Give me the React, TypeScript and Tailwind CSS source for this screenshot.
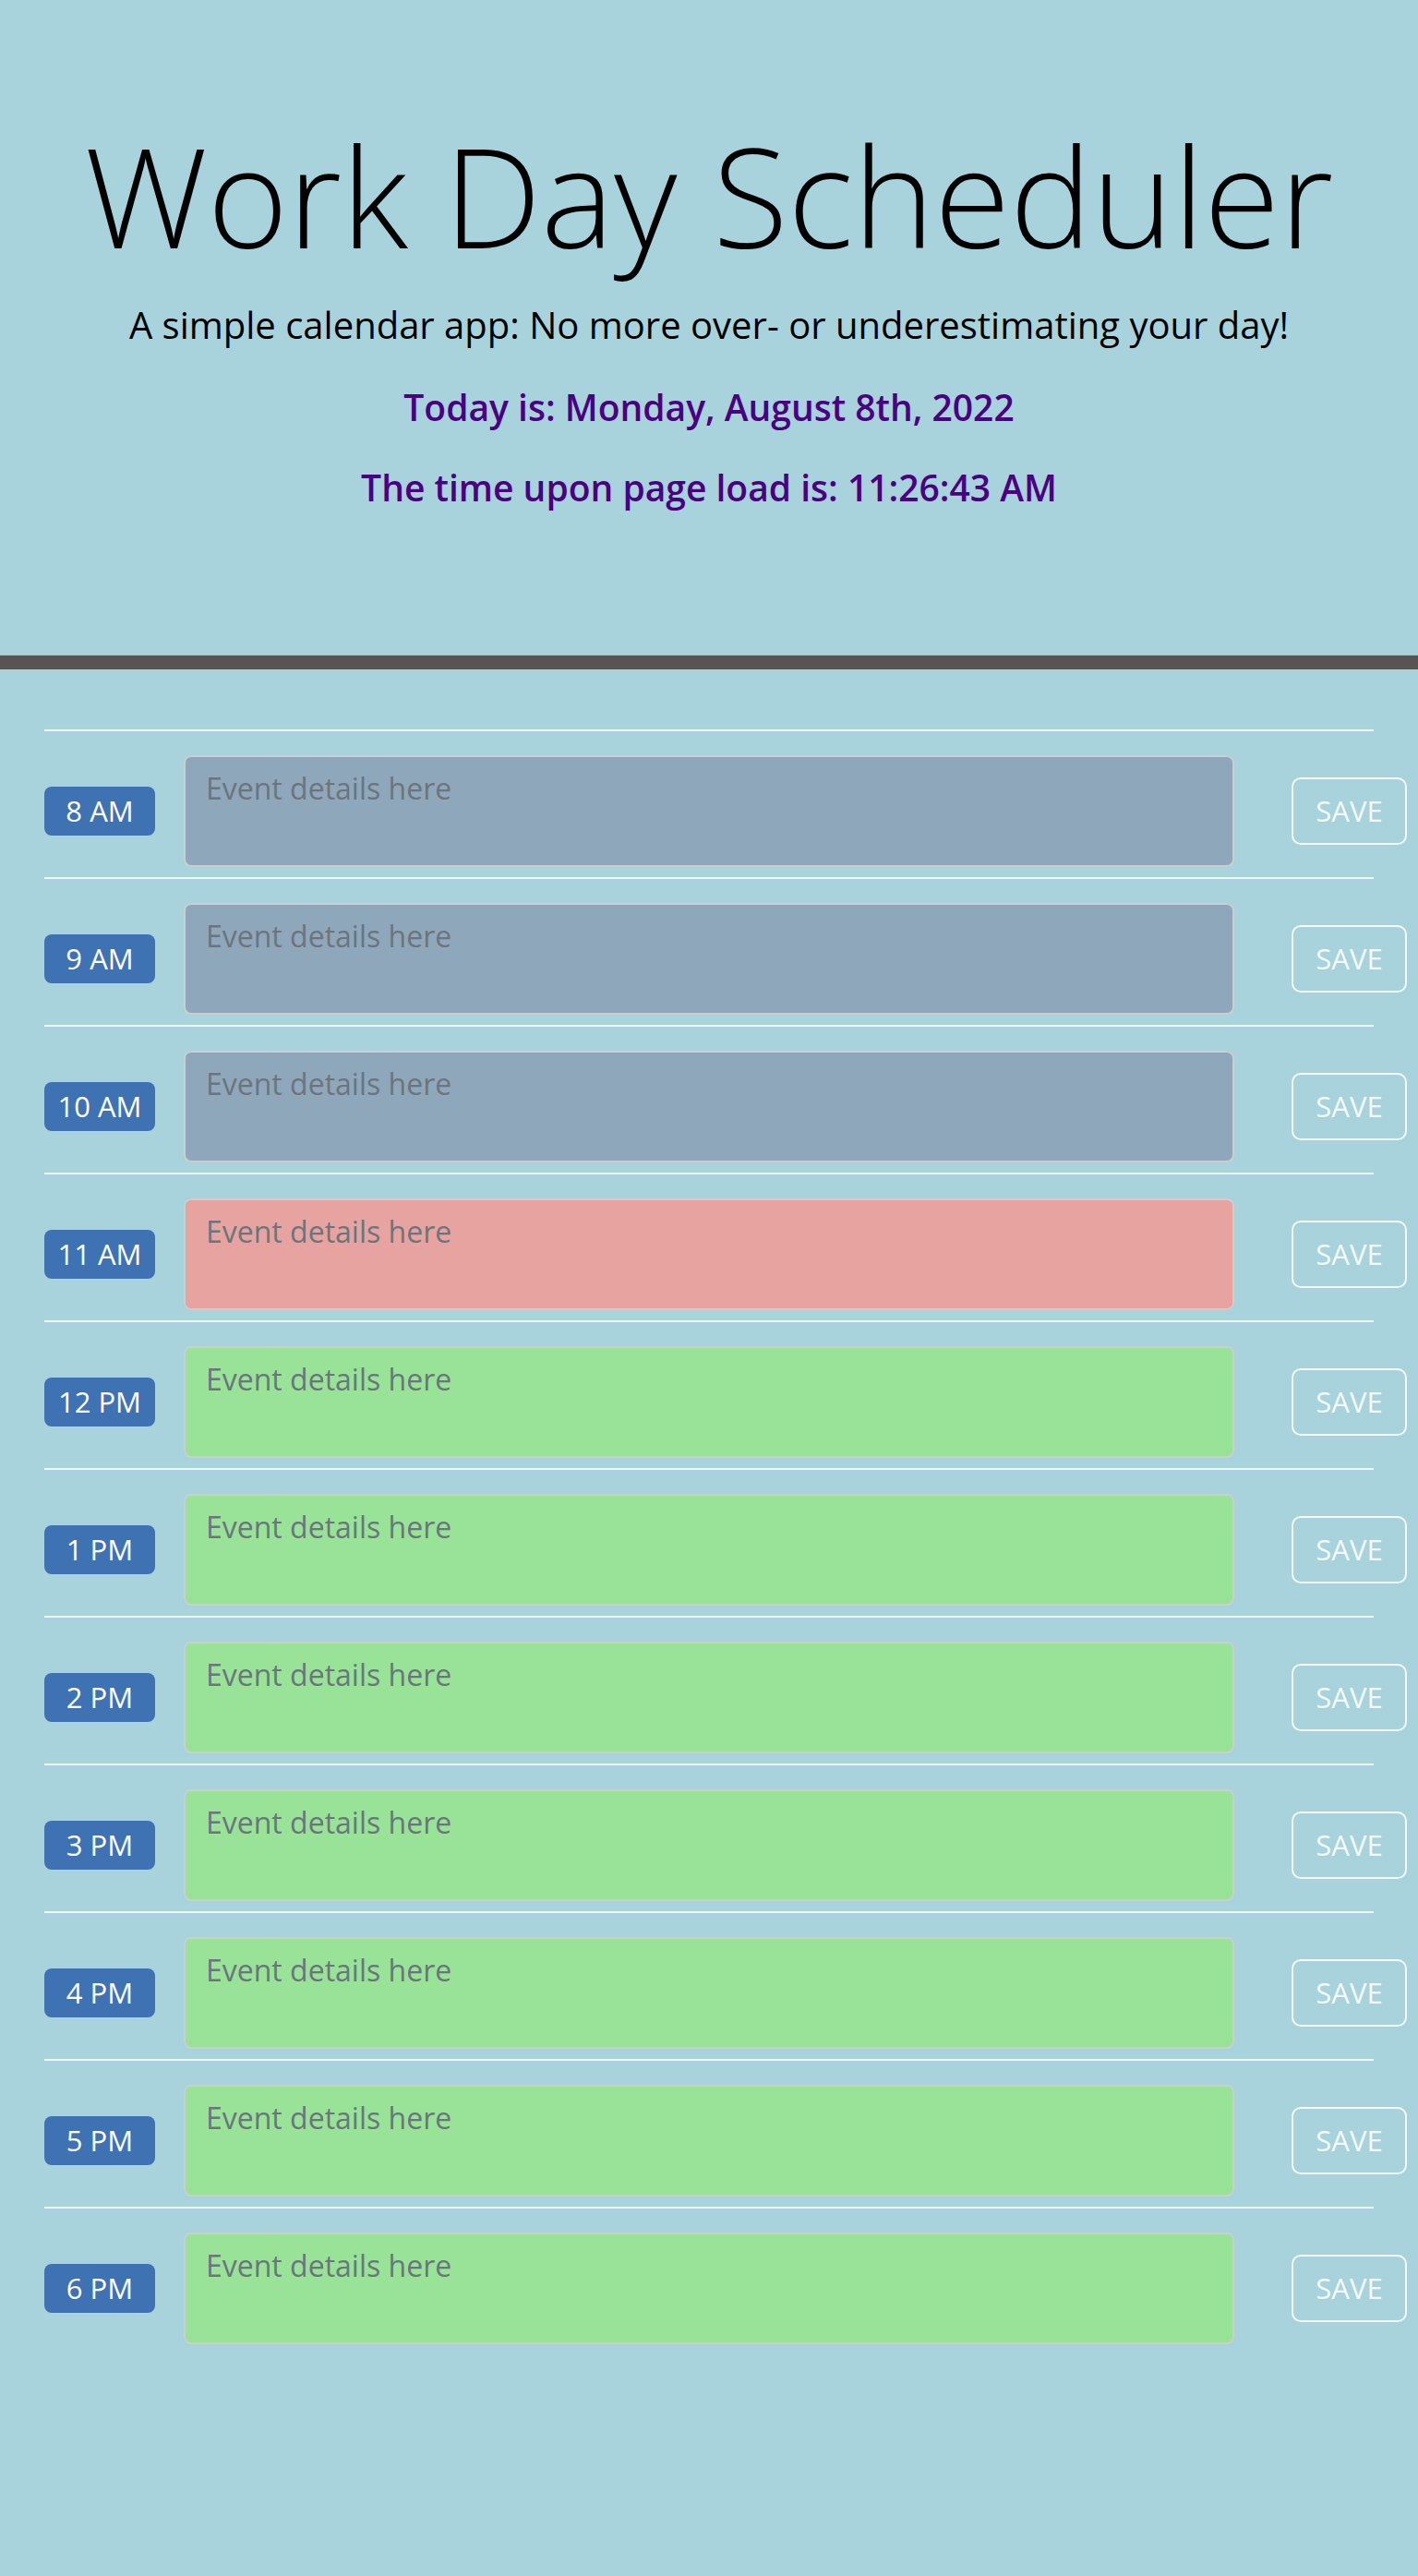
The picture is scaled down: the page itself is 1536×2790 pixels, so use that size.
import React from "react";

type Tense = "past" | "present" | "future";

const hours: { label: string; tense: Tense }[] = [
  { label: "8 AM", tense: "past" },
  { label: "9 AM", tense: "past" },
  { label: "10 AM", tense: "past" },
  { label: "11 AM", tense: "present" },
  { label: "12 PM", tense: "future" },
  { label: "1 PM", tense: "future" },
  { label: "2 PM", tense: "future" },
  { label: "3 PM", tense: "future" },
  { label: "4 PM", tense: "future" },
  { label: "5 PM", tense: "future" },
  { label: "6 PM", tense: "future" },
];

const tenseBg: Record<Tense, string> = {
  past: "bg-[#8fa7ba]",
  present: "bg-[#e7a39f]",
  future: "bg-[#98e397]",
};

function HourRow({ label, tense }: { label: string; tense: Tense }) {
  return (
    <div className="flex items-center border-t-2 border-[#eef8fa] pt-[26px] pb-[11px]">
      <div className="w-[120px] h-[53px] shrink-0 rounded-[8px] bg-[#3e72b3] text-white text-[31px] flex items-center justify-center">
        {label}
      </div>
      <textarea
        placeholder="Event details here"
        className={`ml-[31px] w-[1138px] h-[121px] shrink-0 resize-none rounded-[8px] border-2 border-[#c9ced2] px-[22px] py-[10px] text-[32px] leading-[1.5] text-[#333] placeholder:text-[#6c757d] outline-none ${tenseBg[tense]}`}
      />
      <button className="ml-[62px] w-[125px] h-[73px] shrink-0 rounded-[10px] border-2 border-[#f4fafb] text-[#f4fafb] text-[31px] flex items-center justify-center">
        SAVE
      </button>
    </div>
  );
}

export default function App() {
  return (
    <div className="min-h-screen bg-[#a8d3dc] font-['Open_Sans','Liberation_Sans',sans-serif]">
      {/* Header */}
      <header className="text-center pt-[123px] pb-[151px] border-b border-[#93c1ca]">
        <h1 className="text-[149px] font-light leading-[1.2] text-black">Work Day Scheduler</h1>
        <p className="mt-[20px] text-[40px] leading-[1.5] text-black">
          A simple calendar app: No more over- or underestimating your day!
        </p>
        <p className="mt-[30px] text-[39px] leading-[1.5] font-semibold text-[#4b0082]">
          Today is: Monday, August 8th, 2022
        </p>
        <p className="mt-[29px] text-[39px] leading-[1.5] font-semibold text-[#4b0082]">
          The time upon page load is: 11:26:43 AM
        </p>
      </header>
      <div className="h-[15px] bg-[#585453]" />

      {/* Time blocks */}
      <main className="px-[48px] pt-[65px]">
        {hours.map((h) => (
          <HourRow key={h.label} label={h.label} tense={h.tense} />
        ))}
      </main>
    </div>
  );
}
